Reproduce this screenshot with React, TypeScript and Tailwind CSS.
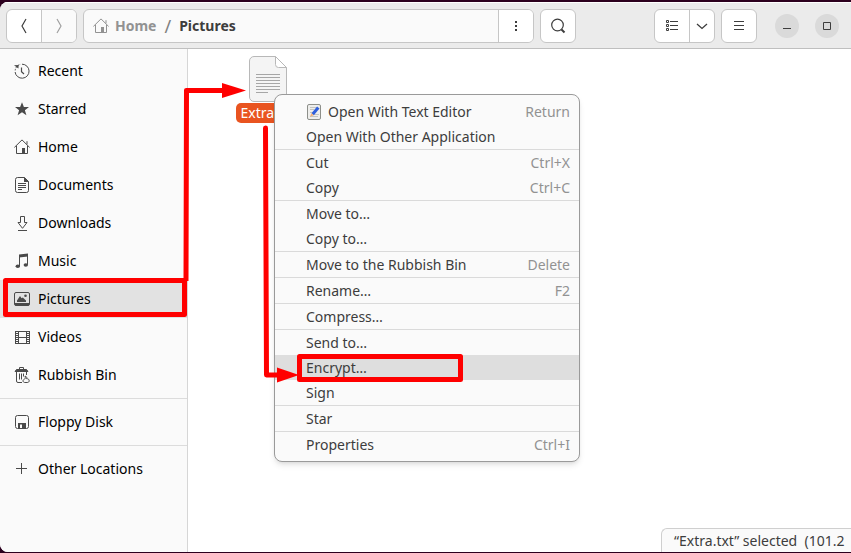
import type { ReactNode } from 'react';

interface Place {
  label: string;
  icon: ReactNode;
  selected?: boolean;
}

interface MenuEntry {
  label: string;
  shortcut?: string;
  icon?: ReactNode;
  active?: boolean;
}

function Icon({ children, className = '' }: { children: ReactNode; className?: string }) {
  return (
    <svg
      viewBox="0 0 16 16"
      className={`size-4 shrink-0 ${className}`}
      fill="none"
      stroke="currentColor"
      strokeWidth="1"
      aria-hidden="true"
    >
      {children}
    </svg>
  );
}

const RecentIcon = () => (
  <Icon>
    <path d="M8 1.2A7 7 0 1 1 1.1 9" />
    <path d="M1.2 7.4A7 7 0 0 1 6.6 1.3" strokeDasharray="1.6 1.2" />
    <path d="M0 2.2 4.6 2 4.4 5.4Z" fill="currentColor" stroke="none" />
    <path d="M7.5 4.5V8.7L10 11" strokeWidth="1.2" />
  </Icon>
);

const StarIcon = () => (
  <Icon>
    <path
      d="M8 1.2 9.9 6H15l-4.1 3.2 1.5 5.1L8 11.3l-4.4 3 1.5-5.1L1 6h5.1Z"
      fill="currentColor"
      stroke="none"
    />
  </Icon>
);

const HomeIcon = () => (
  <Icon>
    <path d="M.4 8.4 8 .9l7.6 7.5" />
    <path d="M2.5 6.8v7.7h6M13.5 6.8v7.7h-3M13 2.2v3.2" />
    <path d="M8 9h3v6H8z" fill="currentColor" stroke="none" />
  </Icon>
);

const DocumentIcon = () => (
  <Icon>
    <path d="M10.5.5h-7a2 2 0 0 0-2 2v11a2 2 0 0 0 2 2h9a2 2 0 0 0 2-2v-9Z" />
    <path d="M10 0v5h5Z" fill="currentColor" stroke="none" />
    <path d="M4 6.5h8M4 8.5h8M4 10.5h8M4 12.5h4" />
  </Icon>
);

const DownloadIcon = () => (
  <Icon>
    <path d="M6.5 1.5h4v6H13l-4.5 5.8L4 7.5h2.5ZM4 15.5h9" />
  </Icon>
);

const MusicIcon = () => (
  <Icon>
    <path d="M5 1.6 14 .5v3L5 4.5Z" fill="currentColor" stroke="none" />
    <path d="M5.5 3v10.2M13.5 2v9.8" />
    <ellipse cx="3.8" cy="13.2" rx="2.2" ry="1.8" fill="currentColor" stroke="none" />
    <ellipse cx="11.8" cy="12" rx="2.2" ry="1.8" fill="currentColor" stroke="none" />
  </Icon>
);

const PictureIcon = () => (
  <Icon>
    <rect x=".5" y="1.5" width="15" height="13" rx="1.5" />
    <path d="M1 12h14v2.5H1z" fill="currentColor" stroke="none" />
    <path d="M3 11V9.5L6 5l1.6 2.2L8.8 6.4 12 9.6V11Z" fill="currentColor" stroke="none" />
    <circle cx="11.5" cy="4.7" r="1.3" fill="currentColor" stroke="none" />
  </Icon>
);

const VideoIcon = () => (
  <Icon>
    <path d="M4.5 2v13M12.5 2v13M4 2.5h9M4 8.5h9M4 14.5h9" />
    <path d="M1.5 2v13M15.5 2v13" />
    <path d="M3 2v13M14 2v13" strokeWidth="2" strokeDasharray="1 1" />
  </Icon>
);

const TrashIcon = () => (
  <Icon>
    <path d="M5.5 2.5V.5h4v2" />
    <path d="M1 4.5 2.5 2.5h10L14 4.5Z" fill="currentColor" />
    <path d="M2.5 5v9a1.5 1.5 0 0 0 1.5 1.5h4M12.5 5v3" />
    <path d="M5.5 6.5v6M7.5 6.5v6M9.5 6.5v3" />
    <path d="M11 9.2c2 .2 2 1.6 1.4 2.4 2 0 2.8 1 2.8 2.2 0 1.1-.9 1.7-2 1.7h-2.4c-1 0-1.8-.7-1.8-1.6 0-1 .9-1.6 1.7-1.9.6-.5.9-1.2.3-2.8Z" />
  </Icon>
);

const FloppyIcon = () => (
  <Icon>
    <rect x="1.5" y="1.5" width="13" height="13" rx="2" />
    <path d="M4 9h8v6H4z" fill="currentColor" stroke="none" />
    <path d="M6 10.5h2V14H6z" fill="#fafafa" stroke="none" />
  </Icon>
);

const PlusIcon = () => (
  <Icon>
    <path d="M2 7.5h11M7.5 2v11" />
  </Icon>
);

const EditorIcon = () => (
  <svg viewBox="0 0 16 16" className="size-4 shrink-0" aria-hidden="true">
    <rect x="1.5" y=".5" width="13" height="15" rx="1.5" fill="#eeeeec" stroke="#8d8f8a" />
    <path d="M4 3.5h7M4 5.5h4M4 8.5h3M8 10.5h5M4 12.5h8" stroke="#c4c5c1" />
    <path d="m5.5 9.3 5.6-6.7 2.4 2-5.7 6.6Z" fill="#2f5fdc" />
    <path d="m5.5 9.3 2.3 1.9-4 1.6Z" fill="#f3b27a" />
  </svg>
);

const TextFileIcon = () => (
  <svg viewBox="0 0 38 46" className="h-[46px] w-[38px]" aria-hidden="true">
    <path
      d="M5 .5h21.5l11 11V41a4.5 4.5 0 0 1-4.5 4.5H5A4.5 4.5 0 0 1 .5 41V5A4.5 4.5 0 0 1 5 .5Z"
      fill="#f4f4f4"
      stroke="#b8b8b8"
    />
    <path d="M26.5.5v8a3 3 0 0 0 3 3h8Z" fill="#fff" stroke="#b8b8b8" />
    <path
      d="M7 18.5h24M7 21.5h24M7 24.5h24M7 27.5h24M7 30.5h24M7 33.5h24M7 36.5h12"
      stroke="#a6a6a6"
    />
  </svg>
);

const places: Place[][] = [
  [
    { label: 'Recent', icon: <RecentIcon /> },
    { label: 'Starred', icon: <StarIcon /> },
    { label: 'Home', icon: <HomeIcon /> },
    { label: 'Documents', icon: <DocumentIcon /> },
    { label: 'Downloads', icon: <DownloadIcon /> },
    { label: 'Music', icon: <MusicIcon /> },
    { label: 'Pictures', icon: <PictureIcon />, selected: true },
    { label: 'Videos', icon: <VideoIcon /> },
    { label: 'Rubbish Bin', icon: <TrashIcon /> },
  ],
  [{ label: 'Floppy Disk', icon: <FloppyIcon /> }],
  [{ label: 'Other Locations', icon: <PlusIcon /> }],
];

const menu: MenuEntry[][] = [
  [
    { label: 'Open With Text Editor', shortcut: 'Return', icon: <EditorIcon /> },
    { label: 'Open With Other Application' },
  ],
  [
    { label: 'Cut', shortcut: 'Ctrl+X' },
    { label: 'Copy', shortcut: 'Ctrl+C' },
  ],
  [{ label: 'Move to…' }, { label: 'Copy to…' }],
  [{ label: 'Move to the Rubbish Bin', shortcut: 'Delete' }],
  [{ label: 'Rename…', shortcut: 'F2' }],
  [{ label: 'Compress…' }],
  [{ label: 'Send to…' }, { label: 'Encrypt…', active: true }, { label: 'Sign' }],
  [{ label: 'Star' }],
  [{ label: 'Properties', shortcut: 'Ctrl+I' }],
];

function HeaderBar() {
  return (
    <header className="flex h-[47px] shrink-0 items-center border-t border-b border-t-white border-b-[#bfbfbf] bg-[#ebebeb] px-1.5 text-[#3d3d3d]">
      <div className="flex h-[34px] divide-x divide-[#c6c6c6] overflow-hidden rounded-md border border-[#c6c6c6] bg-white">
        <button aria-label="Back" className="flex w-[35px] items-center justify-center">
          <Icon>
            <path d="M10 1 6 8l4 7" strokeWidth="1.2" />
          </Icon>
        </button>
        <button aria-label="Forward" className="flex w-[34px] items-center justify-center bg-[#fafafa] text-[#a0a0a0]">
          <Icon>
            <path d="m6 1 4 7-4 7" strokeWidth="1.2" />
          </Icon>
        </button>
      </div>

      {/* Path bar */}
      <div className="ml-1.5 flex h-[34px] max-w-[451px] flex-1 overflow-hidden rounded-md border border-[#c6c6c6] bg-[#fafafa]">
        <nav className="flex flex-1 items-center pl-[9px] text-sm font-bold">
          <a href="#home" className="flex items-center gap-1.5 text-[#929292]">
            <HomeIcon />
            Home
          </a>
          <span className="px-2 text-lg font-normal text-[#808080]">/</span>
          <a href="#pictures">Pictures</a>
        </nav>
        <button aria-label="Folder menu" className="flex w-[35px] items-center justify-center border-l border-[#c6c6c6] bg-white">
          <Icon>
            <path d="M7 3h2v2H7zM7 7h2v2H7zM7 11h2v2H7z" fill="currentColor" stroke="none" />
          </Icon>
        </button>
      </div>
      <button aria-label="Search" className="ml-1.5 flex h-[34px] w-9 items-center justify-center rounded-md border border-[#c6c6c6] bg-white">
        <Icon>
          <circle cx="7.5" cy="7" r="5.8" strokeWidth="1.2" />
          <path d="m11.5 11.5 3 3" strokeWidth="2" />
        </Icon>
      </button>

      {/* View and window controls */}
      <div className="ml-auto flex h-[34px] divide-x divide-[#c6c6c6] overflow-hidden rounded-md border border-[#c6c6c6] bg-white">
        <button aria-label="List view" className="flex w-[35px] items-center justify-center">
          <Icon>
            <path d="M2.5 2.5h2v2h-2zM2.5 6.5h2v2h-2zM2.5 10.5h2v2h-2zM6 3.5h8M6 7.5h8M6 11.5h8" />
          </Icon>
        </button>
        <button aria-label="View options" className="flex w-6 items-center justify-center">
          <Icon>
            <path d="m3 6 5 4.5L13 6" strokeWidth="1.3" />
          </Icon>
        </button>
      </div>
      <button aria-label="Main menu" className="ml-1.5 flex h-[34px] w-9 items-center justify-center rounded-md border border-[#c6c6c6] bg-white">
        <Icon>
          <path d="M3 3.5h10M3 7.5h10M3 11.5h10" />
        </Icon>
      </button>
      <button aria-label="Minimise" className="ml-[18px] flex size-6 items-center justify-center rounded-full bg-[#dadada]">
        <Icon>
          <path d="M4 10.5h8" />
        </Icon>
      </button>
      <button aria-label="Maximise" className="mr-1.5 ml-4 flex size-6 items-center justify-center rounded-full bg-[#dadada]">
        <Icon>
          <path d="M4.5 4.5h7v7h-7z" />
        </Icon>
      </button>
    </header>
  );
}

function Sidebar() {
  return (
    <aside className="w-[188px] shrink-0 divide-y divide-[#dcdcdc] border-r border-[#d6d6d6] bg-[#fafafa]">
      {places.map((group) => (
        <ul key={group[0].label} className="py-1 first:pt-[3px]">
          {group.map((place) => (
            <li key={place.label}>
              <button
                className={`flex h-[38px] w-full items-center gap-2 pl-3.5 text-sm text-black ${
                  place.selected ? 'bg-[#e2e2e2]' : ''
                }`}
              >
                <span className="text-[#4a4a4a]">{place.icon}</span>
                {place.label}
              </button>
            </li>
          ))}
        </ul>
      ))}
    </aside>
  );
}

function ContextMenu() {
  return (
    <div
      role="menu"
      className="absolute top-[45px] left-[86px] w-[306px] divide-y divide-[#dadada] rounded-lg border border-[#9a9a9a] bg-[#fafafa] py-1 text-sm text-[#3d3d3d] shadow-md"
    >
      {menu.map((section) => (
        <div key={section[0].label}>
          {section.map((entry) => (
            <button
              key={entry.label}
              role="menuitem"
              className={`flex h-[25px] w-full items-center pr-[9px] pl-[31px] ${
                entry.active ? 'bg-[#dedede]' : ''
              }`}
            >
              {entry.icon && <span className="mr-1.5">{entry.icon}</span>}
              {entry.label}
              {entry.shortcut && <span className="ml-auto text-[#929292]">{entry.shortcut}</span>}
            </button>
          ))}
        </div>
      ))}
    </div>
  );
}

// Red boxes and arrows that walk through the steps
function Callouts() {
  return (
    <svg
      width="480"
      height="400"
      className="pointer-events-none absolute top-0 left-0"
      fill="none"
      stroke="#ff0000"
      strokeWidth="5"
      strokeLinejoin="round"
      aria-hidden="true"
    >
      <rect x="5.5" y="280.5" width="179" height="34" />
      <path d="M186 281 186.500 90.500H224" />
      <path d="M222 83v15l24-7.500Z" fill="#ff0000" stroke="none" />
      <rect x="299.500" y="356.500" width="161" height="23" />
      <path d="M265.500 128 266.500 375H279" strokeLinecap="round" />
      <path d="M277 367.500v15l22-7.500Z" fill="#ff0000" stroke="none" />
    </svg>
  );
}

export default function App() {
  return (
    <div className="relative h-screen overflow-hidden bg-[#2c001e] pt-0.5 pb-px font-['Noto_Sans',sans-serif]">
      <div className="flex h-full flex-col overflow-hidden rounded-l-lg bg-white">
        <HeaderBar />
        <div className="flex min-h-0 flex-1">
          <Sidebar />
          <main className="relative flex-1">
            <div className="flex w-40 flex-col items-center pt-[7px]">
              <TextFileIcon />
              <span className="mt-px rounded-[5px] bg-[#e95420] px-[5px] text-sm leading-5 text-white">Extra.txt</span>
            </div>
            <ContextMenu />
            <div className="absolute right-0 bottom-0 h-6 w-[190px] overflow-hidden rounded-tl-md border-t border-l border-[#cfcfcf] bg-[#fafafa] pl-3 text-sm leading-6 whitespace-pre text-[#3d3d3d]">
              “Extra.txt” selected  (101.2
            </div>
          </main>
        </div>
      </div>
      <Callouts />
    </div>
  );
}
